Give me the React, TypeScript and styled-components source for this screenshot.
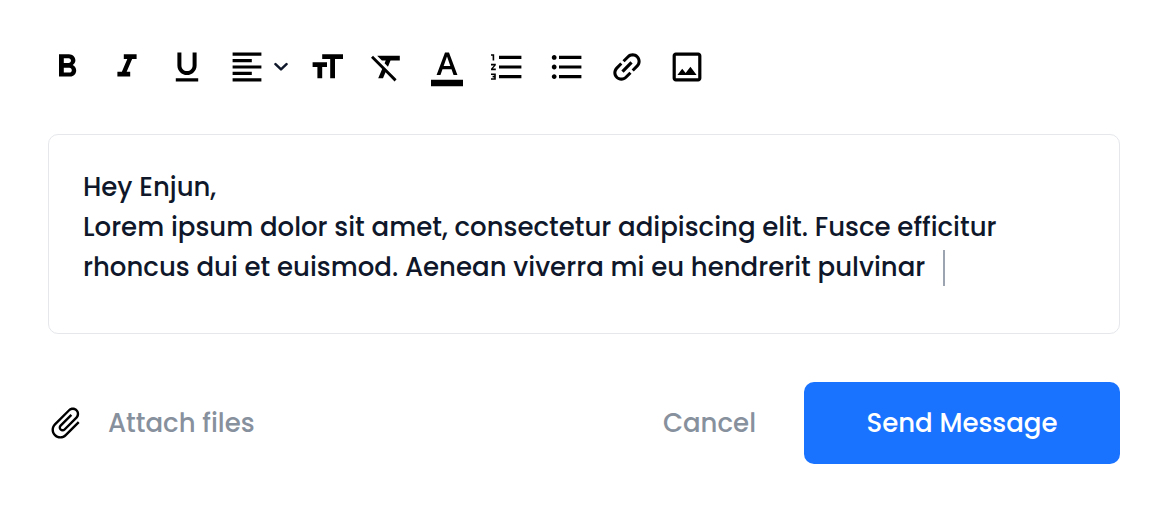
import React, { useState } from "react";
import styled, { createGlobalStyle } from "styled-components";

const GlobalStyle = createGlobalStyle`
  *, *::before, *::after { box-sizing: border-box; }
  body {
    margin: 0;
    background: #ffffff;
    color: #0f172a;
    font-family: Poppins, Inter, "Liberation Sans", sans-serif;
    font-size: 26px;
    font-weight: 500;
    line-height: 40px;
  }
  button, textarea { font: inherit; }
`;

const Composer = styled.form`
  display: flex;
  flex-direction: column;
  gap: 48px;
  padding: 46px 48px 48px;
`;

const Toolbar = styled.div`
  display: flex;
  flex-wrap: wrap;
  gap: 22px;
  padding-top: 1px;
  margin-bottom: -1px;
`;

const ToolButton = styled.button<{ $menu?: boolean }>`
  display: flex;
  align-items: center;
  gap: 8px;
  height: 40px;
  margin: 0 ${(p) => (p.$menu ? "-2px" : "0")} 0 0;
  padding: 0;
  border: 0;
  background: none;
  color: #000000;
  cursor: pointer;
`;

const Glyph = styled.svg`
  display: block;
  width: 38px;
  height: 40px;
  fill: currentColor;
`;

const Chevron = styled.svg`
  display: block;
  width: 14px;
  height: 14px;
  fill: none;
  stroke: #0f172a;
  stroke-width: 2.5;
  stroke-linecap: round;
  stroke-linejoin: round;
`;

const Editor = styled.div`
  position: relative;
`;

const MessageBox = styled.textarea`
  display: block;
  width: 100%;
  height: 200px;
  padding: 32px 34px;
  border: 1px solid #e5e7eb;
  border-radius: 10px;
  outline: 0;
  background: #ffffff;
  color: #0f172a;
  line-height: 40px;
  resize: none;
`;

const Caret = styled.span`
  position: absolute;
  top: 116px;
  left: 895px;
  width: 2px;
  height: 36px;
  background: #9ba4b0;
  pointer-events: none;
`;

const Footer = styled.div`
  display: flex;
  align-items: center;
  gap: 48px;
`;

const TextButton = styled.button`
  display: flex;
  align-items: center;
  gap: 24px;
  padding: 0;
  border: 0;
  background: none;
  color: #87909d;
  cursor: pointer;
`;

const AttachButton = styled(TextButton)`
  margin-right: auto;
`;

const ClipGlyph = styled.svg`
  display: block;
  width: 36px;
  height: 40px;
  fill: #000000;
`;

const SendButton = styled.button`
  min-width: 316px;
  height: 82px;
  padding: 0 32px;
  border: 0;
  border-radius: 10px;
  background: #1a73ff;
  color: #ffffff;
  cursor: pointer;
`;

type Tool = { label: string; path: string; menu?: boolean; transform?: string };

const tools: Tool[] = [
  {
    label: "Bold",
    path: "M15.6 10.79c.97-.67 1.65-1.77 1.65-2.79 0-2.26-1.75-4-4-4H7v14h7.04c2.09 0 3.71-1.7 3.71-3.79 0-1.52-.86-2.82-2.15-3.42zM10 6.5h3c.83 0 1.5.67 1.5 1.5s-.67 1.5-1.5 1.5h-3v-3zm3.5 9H10v-3h3.5c.83 0 1.5.67 1.5 1.5s-.67 1.5-1.5 1.5z",
  },
  { label: "Italic", path: "M10 4v3h2.21l-3.42 8H6v3h8v-3h-2.21l3.42-8H18V4z" },
  {
    label: "Underline",
    path: "M12 17c3.31 0 6-2.69 6-6V3h-2.5v8c0 1.93-1.57 3.5-3.5 3.5S8.5 12.93 8.5 11V3H6v8c0 3.31 2.69 6 6 6zm-7 2v2h14v-2H5z",
  },
  {
    label: "Alignment",
    menu: true,
    path: "M15 15H3v2h12v-2zm0-8H3v2h12V7zM3 13h18v-2H3v2zm0 8h18v-2H3v2zM3 3v2h18V3H3z",
  },
  { label: "Text size", path: "M9 4v3h5v12h3V7h5V4H9zm-6 8h3v7h3v-7h3V9H3v3z" },
  {
    label: "Clear formatting",
    path: "M3.27 5L2 6.27l6.97 6.97L6.5 19h3l1.57-3.66L16.73 21 18 19.73 3.55 5.27 3.27 5zM6 5v.18L8.82 8h2.4l-.72 1.68 2.1 2.1L14.21 8H20V5H6z",
  },
  {
    label: "Text color",
    path: "M2 20h20v4H2zM5.49 17h2.42l1.27-3.58h5.65L16.09 17h2.42L13.25 3h-2.5L5.49 17zm4.42-5.61 2.03-5.79h.12l2.03 5.79H9.91z",
  },
  {
    label: "Numbered list",
    path: "M2 17h2v.5H3v1h1v.5H2v1h3v-4H2v1zm1-9h1V4H2v1h1v3zm-1 3h1.8L2 13.1v.9h3v-1H3.2L5 10.9V10H2v1zm5-6v2h14V5H7zm0 14h14v-2H7v2zm0-6h14v-2H7v2z",
  },
  {
    label: "Bulleted list",
    path: "M4 10.5c-.83 0-1.5.67-1.5 1.5s.67 1.5 1.5 1.5 1.5-.67 1.5-1.5-.67-1.5-1.5-1.5zm0-6c-.83 0-1.5.67-1.5 1.5S3.17 7.5 4 7.5 5.5 6.83 5.5 6 4.83 4.5 4 4.5zm0 12c-.83 0-1.5.68-1.5 1.5s.68 1.5 1.5 1.5 1.5-.68 1.5-1.5-.67-1.5-1.5-1.5zM7 19h14v-2H7v2zm0-6h14v-2H7v2zm0-8v2h14V5H7z",
  },
  {
    label: "Insert link",
    transform: "rotate(-45 12 12)",
    path: "M3.9 12c0-1.71 1.39-3.1 3.1-3.1h4V7H7c-2.76 0-5 2.24-5 5s2.24 5 5 5h4v-1.9H7c-1.71 0-3.1-1.39-3.1-3.1zM8 13h8v-2H8v2zm9-6h-4v1.9h4c1.71 0 3.1 1.39 3.1 3.1s-1.39 3.1-3.1 3.1h-4V17h4c2.76 0 5-2.24 5-5s-2.24-5-5-5z",
  },
  {
    label: "Insert image",
    path: "M19 5v14H5V5h14m0-2H5c-1.1 0-2 .9-2 2v14c0 1.1.9 2 2 2h14c1.1 0 2-.9 2-2V5c0-1.1-.9-2-2-2zm-4.86 8.86l-3 3.87L9 13.14 6 17h12l-3.86-5.14z",
  },
];

const draft =
  "Hey Enjun,\nLorem ipsum dolor sit amet, consectetur adipiscing elit. Fusce efficitur rhoncus dui et euismod. Aenean viverra mi eu hendrerit pulvinar";

export default function App() {
  const [message, setMessage] = useState(draft);

  return (
    <>
      <GlobalStyle />
      <Composer onSubmit={(e) => e.preventDefault()}>
        <Toolbar role="toolbar" aria-label="Formatting">
          {tools.map((tool) => (
            <ToolButton
              key={tool.label}
              type="button"
              aria-label={tool.label}
              aria-haspopup={tool.menu ? "menu" : undefined}
              $menu={tool.menu}
            >
              <Glyph viewBox="0.125 -0.5 23.75 25" aria-hidden="true">
                <path d={tool.path} transform={tool.transform} />
              </Glyph>
              {tool.menu && (
                <Chevron viewBox="0 0 14 14" aria-hidden="true">
                  <path d="M1.5 4.2L7 9.4L12.5 4.2" />
                </Chevron>
              )}
            </ToolButton>
          ))}
        </Toolbar>

        <Editor>
          <MessageBox
            aria-label="Message"
            spellCheck={false}
            value={message}
            onChange={(e) => setMessage(e.target.value)}
          />
          <Caret aria-hidden="true" />
        </Editor>

        <Footer>
          <AttachButton type="button">
            <ClipGlyph viewBox="0.75 -0.5 22.5 25" aria-hidden="true">
              <path
                transform="rotate(45 12 12)"
                d="M16.5 6v11.5c0 2.21-1.79 4-4 4s-4-1.79-4-4V5c0-1.38 1.12-2.5 2.5-2.5s2.5 1.12 2.5 2.5v10.5c0 .55-.45 1-1 1s-1-.45-1-1V6H10v9.5c0 1.38 1.12 2.5 2.5 2.5s2.5-1.12 2.5-2.5V5c0-2.21-1.79-4-4-4S7 2.79 7 5v12.5c0 3.04 2.46 5.5 5.5 5.5s5.5-2.46 5.5-5.5V6h-1.5z"
              />
            </ClipGlyph>
            Attach files
          </AttachButton>
          <TextButton type="button">Cancel</TextButton>
          <SendButton type="submit">Send Message</SendButton>
        </Footer>
      </Composer>
    </>
  );
}
